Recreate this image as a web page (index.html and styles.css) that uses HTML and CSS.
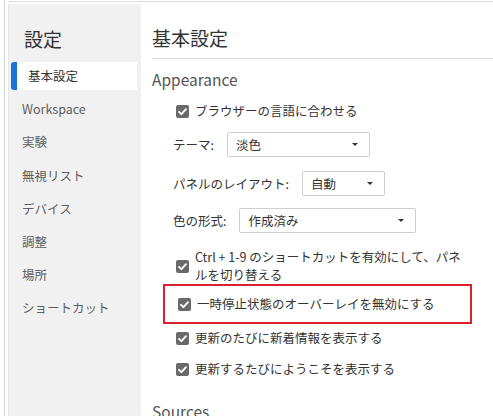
FILE: index.html
```html
<!DOCTYPE html>
<html lang="ja">
<head>
<meta charset="utf-8">
<title>設定</title>
<link rel="stylesheet" href="styles.css">
</head>
<body>
<div class="desk">
  <div class="rail"></div>
  <div class="window">
    <div class="topline"></div>
    <div class="dialog">
      <nav class="sidebar">
        <div class="side-title">設定</div>
        <ul class="nav">
          <li class="nav-item selected">基本設定</li>
          <li class="nav-item">Workspace</li>
          <li class="nav-item">実験</li>
          <li class="nav-item">無視リスト</li>
          <li class="nav-item">デバイス</li>
          <li class="nav-item">調整</li>
          <li class="nav-item">場所</li>
          <li class="nav-item">ショートカット</li>
        </ul>
      </nav>
      <main class="main">
        <h1 class="heading">基本設定</h1>
        <h2 class="section">Appearance</h2>
        <div class="settings">
          <label class="check row-lang"><span class="box"><svg viewBox="0 0 13 13" width="13" height="13"><path d="M3 6.8 L5.4 9.2 L10 4.2" fill="none" stroke="#fff" stroke-width="1.9" stroke-linecap="round" stroke-linejoin="round"/></svg></span><span class="text">ブラウザーの言語に合わせる</span></label>

          <div class="field row-theme"><span class="flabel">テーマ:</span><span class="select sel-theme"><span class="val">淡色</span><span class="caret"></span></span></div>

          <div class="field row-panel"><span class="flabel">パネルのレイアウト:</span><span class="select sel-panel"><span class="val">自動</span><span class="caret"></span></span></div>

          <div class="field row-color"><span class="flabel">色の形式:</span><span class="select sel-color"><span class="val">作成済み</span><span class="caret"></span></span></div>

          <label class="check row-ctrl"><span class="box"><svg viewBox="0 0 13 13" width="13" height="13"><path d="M3 6.8 L5.4 9.2 L10 4.2" fill="none" stroke="#fff" stroke-width="1.9" stroke-linecap="round" stroke-linejoin="round"/></svg></span><span class="text">Ctrl + 1-9 のショートカットを有効にして、パネ<br>ルを切り替える</span></label>

          <div class="highlight">
            <label class="check"><span class="box"><svg viewBox="0 0 13 13" width="13" height="13"><path d="M3 6.8 L5.4 9.2 L10 4.2" fill="none" stroke="#fff" stroke-width="1.9" stroke-linecap="round" stroke-linejoin="round"/></svg></span><span class="text">一時停止状態のオーバーレイを無効にする</span></label>
          </div>

          <label class="check row-upd1"><span class="box"><svg viewBox="0 0 13 13" width="13" height="13"><path d="M3 6.8 L5.4 9.2 L10 4.2" fill="none" stroke="#fff" stroke-width="1.9" stroke-linecap="round" stroke-linejoin="round"/></svg></span><span class="text">更新のたびに新着情報を表示する</span></label>

          <label class="check row-upd2"><span class="box"><svg viewBox="0 0 13 13" width="13" height="13"><path d="M3 6.8 L5.4 9.2 L10 4.2" fill="none" stroke="#fff" stroke-width="1.9" stroke-linecap="round" stroke-linejoin="round"/></svg></span><span class="text">更新するたびにようこそを表示する</span></label>
        </div>
        <h2 class="section sources">Sources</h2>
      </main>
    </div>
  </div>
</div>
</body>
</html>
```

FILE: styles.css
```css
html, body {
  margin: 0;
  padding: 0;
  height: 416px;
  overflow: hidden;
  background: #ffffff;
  font-family: "Noto Sans CJK JP", "Noto Sans", sans-serif;
  color: #333333;
}

.desk {
  display: flex;
  height: 416px;
  padding-left: 4px;
  box-sizing: border-box;
}

.rail {
  width: 1px;
  background: #d4d4d4;
  margin-right: 3px;
  flex: none;
}

.window {
  flex: 1;
  display: flex;
  flex-direction: column;
  min-width: 0;
}

.topline {
  height: 1px;
  margin-top: 1px;
  background: #dcdcdc;
  flex: none;
}

.dialog {
  margin-top: 2px;
  display: flex;
  flex: 1;
  min-height: 0;
}

.sidebar {
  width: 133px;
  flex: none;
  background: #f1f1f1;
  border-left: 1px solid #e6e6e6;
  box-sizing: border-box;
}

.side-title {
  font-size: 19px;
  line-height: 24px;
  padding: 23px 0 0 15px;
  color: #333333;
}

.nav {
  list-style: none;
  margin: 11px 0 0 2px;
  padding: 0;
  display: flex;
  flex-direction: column;
  gap: 5.2px;
}

.nav-item {
  width: 126px;
  height: 28px;
  line-height: 28px;
  padding-left: 11px;
  box-sizing: border-box;
  font-size: 12.5px;
  color: #606060;
}

.nav-item.selected {
  background: #ffffff;
  border-left: 6px solid #1a73d9;
  border-radius: 3px 0 0 3px;
  color: #333333;
}

.main {
  flex: 1;
  padding: 22px 0 0 11px;
  min-width: 0;
}

.heading {
  margin: 0;
  font-size: 19px;
  font-weight: normal;
  line-height: 24px;
  padding-bottom: 8px;
  border-bottom: 1px solid #d6d6d6;
  color: #333333;
}

.section {
  margin: 10px 0 0 0;
  font-size: 15.5px;
  font-weight: normal;
  line-height: 20px;
  color: #555555;
}

.settings {
  display: flex;
  flex-direction: column;
  padding-left: 21px;
}

.check {
  display: flex;
  align-items: center;
  padding-left: 3px;
  font-size: 12.5px;
  line-height: 20px;
  color: #333333;
}

.box {
  width: 13px;
  height: 13px;
  background: #6a6a6a;
  border-radius: 2px;
  flex: none;
  display: flex;
}

.text {
  margin-left: 6px;
}

.row-lang { margin-top: 12px; }

.field {
  display: flex;
  align-items: center;
  font-size: 12.5px;
  color: #333333;
}

.row-theme { margin-top: 11px; }
.row-panel { margin-top: 14px; }
.row-color { margin-top: 12px; }

.select {
  margin-left: 13px;
  height: 25px;
  box-sizing: border-box;
  border: 1px solid #cfcfcf;
  border-radius: 2px;
  background: #ffffff;
  display: flex;
  align-items: center;
  padding-left: 8px;
}

.sel-theme { width: 143px; }
.sel-panel { width: 83px; }
.sel-color { width: 177px; }

.val {
  flex: 1;
}

.caret {
  width: 0;
  height: 0;
  border-left: 3px solid transparent;
  border-right: 3px solid transparent;
  border-top: 3px solid #333333;
  margin-right: 11px;
}

.row-ctrl {
  margin-top: 15px;
  line-height: 18px;
}

.highlight {
  margin: 0 0 0 -10px;
  width: 309px;
  height: 40px;
  box-sizing: border-box;
  border: 2px solid #d8232f;
  display: flex;
  align-items: center;
  padding-left: 10px;
}

.row-upd1 { margin-top: 4px; }
.row-upd2 { margin-top: 11px; }

.sources {
  margin-top: 22px;
}
```
